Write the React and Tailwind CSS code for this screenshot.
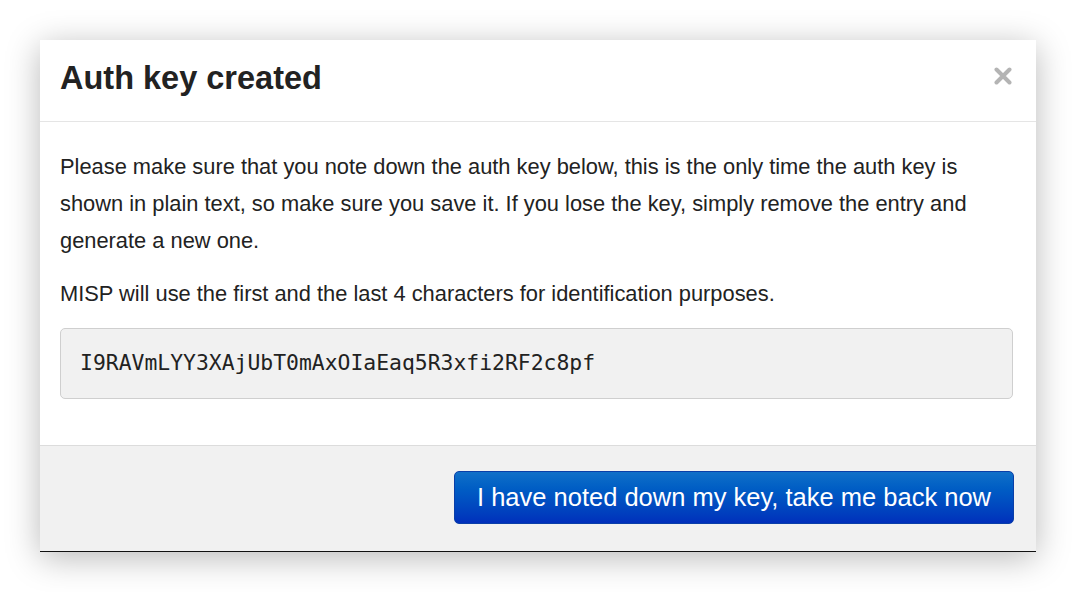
export default function App() {
  return (
    <div className="h-[592px] overflow-hidden bg-white pt-[40px] pl-[40px]" style={{ fontFamily: '"Liberation Sans", Arial, sans-serif' }}>
      <div className="w-[996px] bg-white shadow-[0_6px_32px_rgba(0,0,0,0.28)] border-b border-[#111]">
        <div className="flex h-[82px] items-center justify-between border-b border-[#e5e5e5] pl-[20px] pr-[24px]">
          <h3 className="mb-[4px] text-[32.5px] font-bold text-[#222] leading-none">Auth key created</h3>
          <svg width="18" height="18" viewBox="0 0 18 18" className="mb-[10px]">
            <path d="M2.5 2.5 L15.5 15.5 M15.5 2.5 L2.5 15.5" stroke="#b4b4b4" strokeWidth="4" strokeLinecap="round" />
          </svg>
        </div>
        <div className="pl-[20px] pr-[23px] pt-[26px] pb-[46px] text-[21.85px] text-[#222]">
          <p className="leading-[37px] mb-[16px]">
            Please make sure that you note down the auth key below, this is the only time the auth key is shown in plain text, so make sure you save it. If you lose the key, simply remove the entry and generate a new one.
          </p>
          <p className="leading-[37px] mb-[16px]">MISP will use the first and the last 4 characters for identification purposes.</p>
          <div className="flex h-[71px] items-center rounded-[5px] border border-[#cfcfcf] bg-[#f1f1f1] px-[19px] text-[21.4px] text-[#222]" style={{ fontFamily: '"DejaVu Sans Mono", monospace' }}>
            I9RAVmLYY3XAjUbT0mAxOIaEaq5R3xfi2RF2c8pf
          </div>
        </div>
        <div className="flex h-[106px] items-start justify-end border-t border-[#dcdcdc] bg-[#f1f1f1] pt-[25px] pr-[22px]">
          <button className="h-[53px] w-[560px] rounded-[5px] border border-[#0a3fa8] bg-gradient-to-b from-[#1170c8] to-[#022fbb] text-[25.5px] text-white">
            I have noted down my key, take me back now
          </button>
        </div>
      </div>
    </div>
  );
}
